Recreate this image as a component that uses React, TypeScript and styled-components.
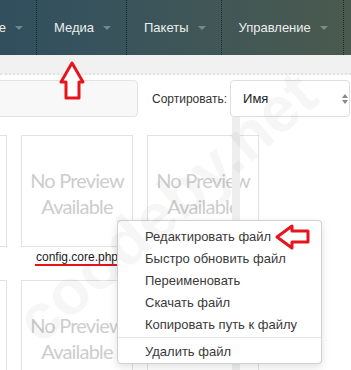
import React from 'react'
import styled, { createGlobalStyle } from 'styled-components'

const GlobalStyle = createGlobalStyle`
  html, body {
    margin: 0;
    padding: 0;
    background: #fff;
    font-family: 'Liberation Sans', Arial, sans-serif;
    overflow: hidden;
  }
`

const navItems = ['Содержимое', 'Медиа', 'Пакеты', 'Управление']

const menuItems = [
  'Редактировать файл',
  'Быстро обновить файл',
  'Переименовать',
  'Скачать файл',
  'Копировать путь к файлу',
]

const files = [
  { name: '' },
  { name: 'config.core.php', marked: true },
  { name: '' },
  { name: '' },
  { name: '' },
  { name: '' },
]

const App: React.FC = () => {
  return (
    <Page>
      <GlobalStyle />
      <NavBar>
        {navItems.map((item, i) => (
          <NavItem key={item} $first={i === 0}>
            {item}
            <Caret />
          </NavItem>
        ))}
      </NavBar>
      <SubBar />

      <Toolbar>
        <SearchInput />
        <SortLabel>Сортировать:</SortLabel>
        <SortSelect>
          Имя
          <Spinner>
            <SpinUp />
            <SpinDown />
          </Spinner>
        </SortSelect>
      </Toolbar>

      <Content>
        <Grid>
          {files.map((f, i) => (
            <Cell key={i}>
              <Thumb>
                <NoPreview>
                  No Preview
                  <br />
                  Available
                </NoPreview>
              </Thumb>
              <FileName $marked={!!f.marked}>{f.name}</FileName>
            </Cell>
          ))}
        </Grid>
        <ScrollStrip />
      </Content>

      <ContextMenu>
        {menuItems.map(item => (
          <MenuItem key={item}>{item}</MenuItem>
        ))}
        <MenuDivider />
        <MenuItem>Удалить файл</MenuItem>
      </ContextMenu>

      <UpArrow width="30" height="42" viewBox="0 0 30 42">
        <polygon
          points="14,3 25,22 21,22 21,38 8,38 8,22 3,22"
          fill="#fff"
          stroke="#e8141c"
          strokeWidth="3"
          strokeLinejoin="round"
        />
      </UpArrow>

      <LeftArrow width="40" height="30" viewBox="0 0 40 30">
        <polygon
          points="4,15 19,4 19,9 35,9 35,20 19,20 19,26"
          fill="#fff"
          stroke="#e8141c"
          strokeWidth="3"
          strokeLinejoin="round"
        />
      </LeftArrow>

      <Watermark>coodeby.net</Watermark>
    </Page>
  )
}

const Page = styled.div`
  position: relative;
  width: 351px;
  height: 370px;
  overflow: hidden;
  background: #fff;
`

const NavBar = styled.div`
  display: flex;
  height: 55px;
  margin-left: -60px;
  background: linear-gradient(to right, #2d4c5d 0%, #36525d 35%, #3f5658 60%, #4a5a4e 100%);
`

const NavItem = styled.div<{ $first: boolean }>`
  display: flex;
  align-items: center;
  gap: 9px;
  padding: 0 15px 0 17px;
  border-right: 1px dotted rgba(10, 25, 35, 0.75);
  color: #eceeee;
  font-size: 13px;
  white-space: nowrap;
  ${p => (p.$first ? 'padding-left: 0; justify-content: flex-end; width: 83px; padding-right: 13px;' : '')}
`

const Caret = styled.span`
  width: 0;
  height: 0;
  border-left: 4px solid transparent;
  border-right: 4px solid transparent;
  border-top: 4px solid rgba(255, 255, 255, 0.3);
  margin-top: 1px;
`

const SubBar = styled.div`
  height: 18px;
  background: #f1f1f1;
  border-bottom: 2px dotted #e2e2e2;
`

const Toolbar = styled.div`
  display: flex;
  align-items: center;
  height: 37px;
  margin-top: 5px;
`

const SearchInput = styled.div`
  width: 150px;
  height: 35px;
  margin-left: -14px;
  background: #f8f8f8;
  border: 1px solid #e3e3e3;
  border-radius: 4px;
`

const SortLabel = styled.span`
  margin-left: 14px;
  font-size: 12px;
  color: #333;
`

const SortSelect = styled.div`
  position: relative;
  display: flex;
  align-items: center;
  box-sizing: border-box;
  width: 120px;
  height: 37px;
  margin-left: 3px;
  padding-left: 12px;
  border: 1px solid #dedede;
  border-radius: 4px;
  background: #fff;
  font-size: 13px;
  color: #222;
`

const Spinner = styled.div`
  position: absolute;
  right: 1px;
  top: 13px;
  display: flex;
  flex-direction: column;
  gap: 2px;
`

const SpinUp = styled.span`
  width: 0;
  height: 0;
  border-left: 3.5px solid transparent;
  border-right: 3.5px solid transparent;
  border-bottom: 4px solid #888;
`

const SpinDown = styled.span`
  width: 0;
  height: 0;
  border-left: 3.5px solid transparent;
  border-right: 3.5px solid transparent;
  border-top: 4px solid #888;
`

const Content = styled.div`
  display: flex;
`

const Grid = styled.div`
  display: grid;
  grid-template-columns: repeat(3, 112px);
  column-gap: 14px;
  row-gap: 13px;
  width: 337px;
  margin-left: -105px;
  padding-top: 18px;
  flex-shrink: 0;
`

const Cell = styled.div`
  display: flex;
  flex-direction: column;
  align-items: center;
`

const Thumb = styled.div`
  box-sizing: border-box;
  width: 112px;
  height: 112px;
  border: 1px solid #e2e2e2;
  display: flex;
  align-items: center;
  justify-content: center;
`

const NoPreview = styled.div`
  font-family: Lato, 'Open Sans', sans-serif;
  font-size: 20px;
  line-height: 26px;
  letter-spacing: -0.8px;
  color: #cdcdcd;
  text-align: center;
  margin-top: 4px;
`

const FileName = styled.div<{ $marked: boolean }>`
  position: relative;
  height: 20px;
  line-height: 20px;
  font-size: 12px;
  color: #222;
  &::after {
    content: '';
    display: ${p => (p.$marked ? 'block' : 'none')};
    position: absolute;
    left: -1px;
    right: 1px;
    top: 17px;
    height: 2px;
    background: #e8141c;
  }
`

const ScrollStrip = styled.div`
  width: 8px;
  background: #eeeeee;
  flex-shrink: 0;
`

const ContextMenu = styled.div`
  position: absolute;
  left: 117px;
  top: 220px;
  box-sizing: border-box;
  width: 205px;
  padding: 5px 0 0;
  height: 144px;
  background: #fff;
  border: 1px solid rgba(0, 0, 0, 0.18);
  border-radius: 4px;
  box-shadow: 0 3px 8px rgba(0, 0, 0, 0.12);
`

const MenuItem = styled.div`
  height: 22px;
  line-height: 22px;
  padding-left: 27px;
  font-size: 13px;
  color: #3a3a3a;
  white-space: nowrap;
`

const MenuDivider = styled.div`
  height: 1px;
  margin: 1px 0 3px;
  background: #e5e5e5;
`

const UpArrow = styled.svg`
  position: absolute;
  left: 58px;
  top: 60px;
`

const LeftArrow = styled.svg`
  position: absolute;
  left: 273px;
  top: 222px;
`

const Watermark = styled.div`
  position: absolute;
  left: -20px;
  top: 170px;
  transform: rotate(-41deg);
  font-family: 'Liberation Sans', Arial, sans-serif;
  font-weight: bold;
  font-size: 64px;
  color: rgba(0, 0, 0, 0.035);
  white-space: nowrap;
  pointer-events: none;
`

export default App
